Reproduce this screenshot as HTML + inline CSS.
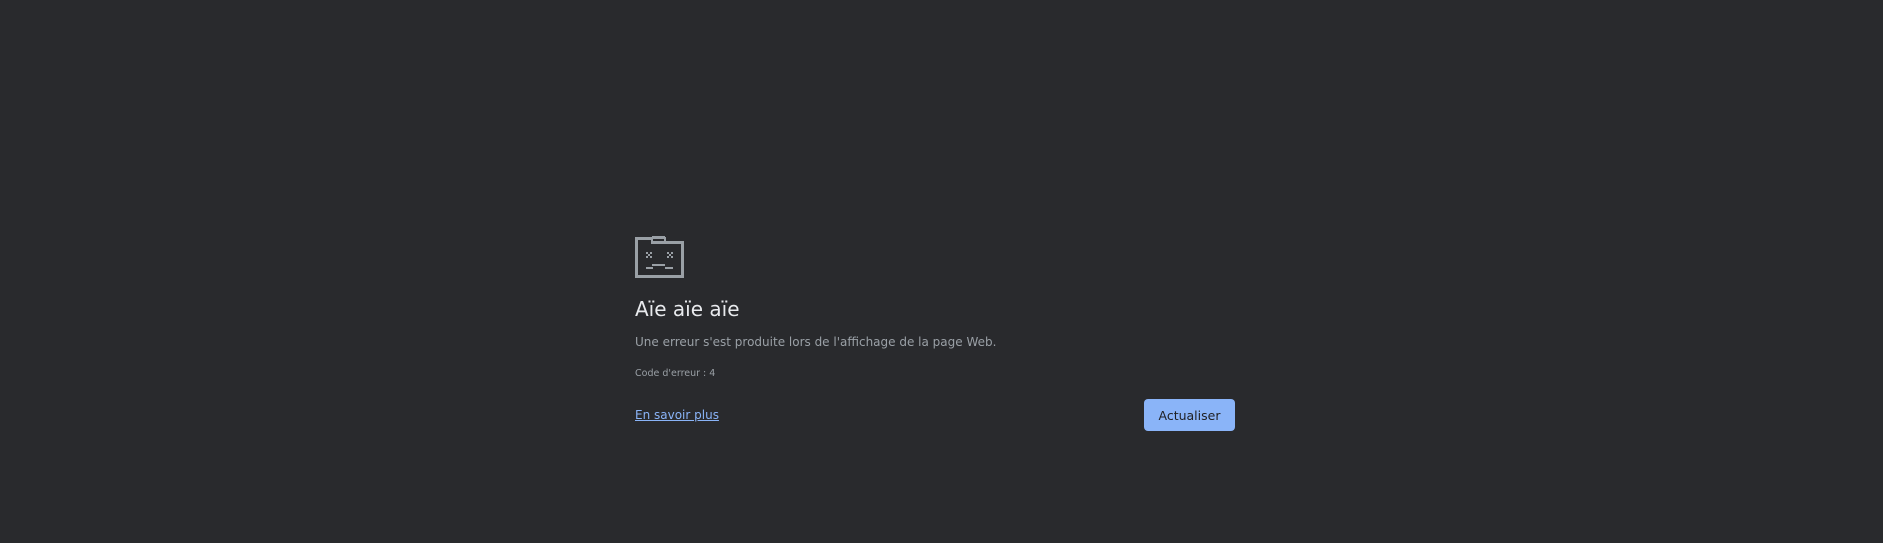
<!DOCTYPE html>
<html><head><meta charset="utf-8"><style>
html,body{margin:0;padding:0;background:#292a2d;width:1883px;height:543px;overflow:hidden;font-family:"DejaVu Sans","Liberation Sans",sans-serif;}
.abs{position:absolute;white-space:nowrap}
h1{position:absolute;left:635px;top:297px;margin:0;font-size:20px;font-weight:normal;color:#e8eaed;}
.p{left:635px;top:335px;font-size:12px;color:#9aa0a6}
.c{left:635px;top:368px;font-size:9.5px;color:#9aa0a6}
.l{left:635px;top:408px;font-size:12px;color:#8ab4f8;text-decoration:underline}
.b{left:1144px;top:399px;width:91px;height:32px;background:#8ab4f8;border-radius:4px;color:#202124;font-size:12.5px;line-height:33px;text-align:center}
</style></head><body>
<svg class="abs" style="left:635px;top:236px" width="49" height="42" viewBox="0 0 49 42" shape-rendering="crispEdges">
<g fill="#9aa0a6">
<rect x="0" y="1" width="3" height="41"/>
<rect x="0" y="39" width="49" height="3"/>
<rect x="46" y="6" width="3" height="36"/>
<rect x="0" y="1" width="17" height="3"/>
<rect x="17" y="0" width="13" height="3"/>
<rect x="16" y="1" width="2" height="6"/>
<rect x="29" y="1" width="2" height="6"/>
<rect x="16" y="5" width="33" height="3"/>
<rect x="11" y="16" width="2" height="2"/><rect x="15" y="16" width="2" height="2"/><rect x="13" y="18" width="2" height="2"/><rect x="11" y="20" width="2" height="2"/><rect x="15" y="20" width="2" height="2"/>
<rect x="32" y="16" width="2" height="2"/><rect x="36" y="16" width="2" height="2"/><rect x="34" y="18" width="2" height="2"/><rect x="32" y="20" width="2" height="2"/><rect x="36" y="20" width="2" height="2"/>
<rect x="11" y="31" width="7" height="2"/><rect x="17" y="28" width="13" height="2"/><rect x="30" y="31" width="8" height="2"/>
</g></svg>
<h1>Aïe aïe aïe</h1>
<div class="abs p">Une erreur s'est produite lors de l'affichage de la page Web.</div>
<div class="abs c">Code d'erreur : 4</div>
<div class="abs l">En savoir plus</div>
<div class="abs b">Actualiser</div>
</body></html>
